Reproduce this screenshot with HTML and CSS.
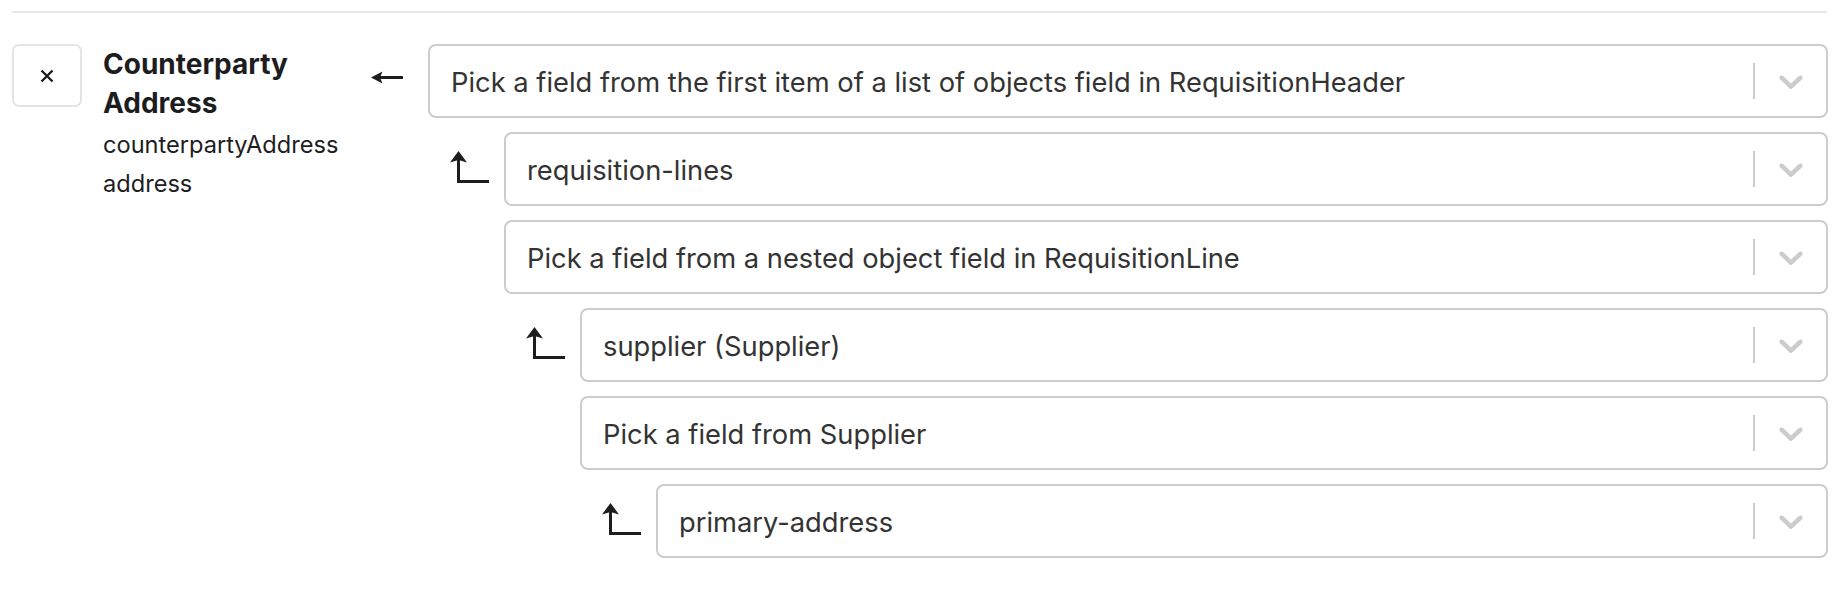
FILE: index.html
```html
<!DOCTYPE html>
<html lang="en">
<head>
    <meta charset="UTF-8">
    <title>Field mapping</title>
    <link rel="stylesheet" href="styles.css">
</head>
<body>
    <div class="page">
        <hr class="divider">
        <div class="mapping">
            <button class="remove" type="button" aria-label="Remove">
                <svg width="14" height="14" viewBox="0 0 14 14"><path d="M1.5 1.5 L12.5 12.5 M12.5 1.5 L1.5 12.5" stroke="#1d1d1f" stroke-width="2.4" fill="none"/></svg>
            </button>
            <div class="target">
                <div class="target-title">Counterparty Address</div>
                <div class="target-key">counterpartyAddress</div>
                <div class="target-key">address</div>
            </div>
            <div class="from-arrow">
                <svg width="33" height="13" viewBox="0 0 33 13"><path d="M0 6.5 L11.5 0.5 L9 6.5 L11.5 12.5 Z" fill="#1d1d1f"/><path d="M8 6.5 H32" stroke="#1d1d1f" stroke-width="3"/></svg>
            </div>
            <div class="tree">
                <div class="select">
                    <div class="select-value">Pick a field from the first item of a list of objects field in RequisitionHeader</div>
                    <span class="select-sep"></span>
                    <span class="select-ind"><svg width="40" height="40" viewBox="0 0 20 20"><path d="M4.516 7.548c0.436-0.446 1.043-0.481 1.576 0l3.908 3.747 3.908-3.747c0.533-0.481 1.141-0.446 1.574 0 0.436 0.445 0.408 1.197 0 1.615-0.406 0.418-4.695 4.502-4.695 4.502-0.217 0.223-0.502 0.335-0.787 0.335s-0.57-0.112-0.789-0.335c0 0-4.287-4.084-4.695-4.502s-0.436-1.17 0-1.615z" fill="#cccccc"/></svg></span>
                </div>
                <div class="nested">
                    <div class="turn"><svg width="40" height="32" viewBox="0 0 40 32"><path d="M8.5 0 L17 11.5 L8.5 9 L0 11.5 Z" fill="#1d1d1f"/><path d="M8.5 8 V30.5 H39" stroke="#1d1d1f" stroke-width="3" fill="none"/></svg></div>
                    <div class="tree">
                        <div class="select">
                            <div class="select-value">requisition-lines</div>
                            <span class="select-sep"></span>
                            <span class="select-ind"><svg width="40" height="40" viewBox="0 0 20 20"><path d="M4.516 7.548c0.436-0.446 1.043-0.481 1.576 0l3.908 3.747 3.908-3.747c0.533-0.481 1.141-0.446 1.574 0 0.436 0.445 0.408 1.197 0 1.615-0.406 0.418-4.695 4.502-4.695 4.502-0.217 0.223-0.502 0.335-0.787 0.335s-0.57-0.112-0.789-0.335c0 0-4.287-4.084-4.695-4.502s-0.436-1.17 0-1.615z" fill="#cccccc"/></svg></span>
                        </div>
                        <div class="select">
                            <div class="select-value">Pick a field from a nested object field in RequisitionLine</div>
                            <span class="select-sep"></span>
                            <span class="select-ind"><svg width="40" height="40" viewBox="0 0 20 20"><path d="M4.516 7.548c0.436-0.446 1.043-0.481 1.576 0l3.908 3.747 3.908-3.747c0.533-0.481 1.141-0.446 1.574 0 0.436 0.445 0.408 1.197 0 1.615-0.406 0.418-4.695 4.502-4.695 4.502-0.217 0.223-0.502 0.335-0.787 0.335s-0.57-0.112-0.789-0.335c0 0-4.287-4.084-4.695-4.502s-0.436-1.17 0-1.615z" fill="#cccccc"/></svg></span>
                        </div>
                        <div class="nested">
                            <div class="turn"><svg width="40" height="32" viewBox="0 0 40 32"><path d="M8.5 0 L17 11.5 L8.5 9 L0 11.5 Z" fill="#1d1d1f"/><path d="M8.5 8 V30.5 H39" stroke="#1d1d1f" stroke-width="3" fill="none"/></svg></div>
                            <div class="tree">
                                <div class="select">
                                    <div class="select-value">supplier (Supplier)</div>
                                    <span class="select-sep"></span>
                                    <span class="select-ind"><svg width="40" height="40" viewBox="0 0 20 20"><path d="M4.516 7.548c0.436-0.446 1.043-0.481 1.576 0l3.908 3.747 3.908-3.747c0.533-0.481 1.141-0.446 1.574 0 0.436 0.445 0.408 1.197 0 1.615-0.406 0.418-4.695 4.502-4.695 4.502-0.217 0.223-0.502 0.335-0.787 0.335s-0.57-0.112-0.789-0.335c0 0-4.287-4.084-4.695-4.502s-0.436-1.17 0-1.615z" fill="#cccccc"/></svg></span>
                                </div>
                                <div class="select">
                                    <div class="select-value">Pick a field from Supplier</div>
                                    <span class="select-sep"></span>
                                    <span class="select-ind"><svg width="40" height="40" viewBox="0 0 20 20"><path d="M4.516 7.548c0.436-0.446 1.043-0.481 1.576 0l3.908 3.747 3.908-3.747c0.533-0.481 1.141-0.446 1.574 0 0.436 0.445 0.408 1.197 0 1.615-0.406 0.418-4.695 4.502-4.695 4.502-0.217 0.223-0.502 0.335-0.787 0.335s-0.57-0.112-0.789-0.335c0 0-4.287-4.084-4.695-4.502s-0.436-1.17 0-1.615z" fill="#cccccc"/></svg></span>
                                </div>
                                <div class="nested">
                                    <div class="turn"><svg width="40" height="32" viewBox="0 0 40 32"><path d="M8.5 0 L17 11.5 L8.5 9 L0 11.5 Z" fill="#1d1d1f"/><path d="M8.5 8 V30.5 H39" stroke="#1d1d1f" stroke-width="3" fill="none"/></svg></div>
                                    <div class="tree">
                                        <div class="select">
                                            <div class="select-value">primary-address</div>
                                            <span class="select-sep"></span>
                                            <span class="select-ind"><svg width="40" height="40" viewBox="0 0 20 20"><path d="M4.516 7.548c0.436-0.446 1.043-0.481 1.576 0l3.908 3.747 3.908-3.747c0.533-0.481 1.141-0.446 1.574 0 0.436 0.445 0.408 1.197 0 1.615-0.406 0.418-4.695 4.502-4.695 4.502-0.217 0.223-0.502 0.335-0.787 0.335s-0.57-0.112-0.789-0.335c0 0-4.287-4.084-4.695-4.502s-0.436-1.17 0-1.615z" fill="#cccccc"/></svg></span>
                                        </div>
                                    </div>
                                </div>
                            </div>
                        </div>
                    </div>
                </div>
            </div>
        </div>
    </div>
</body>
</html>
```

FILE: styles.css
```css
body {
    margin: 0;
    background: #ffffff;
    font-family: Inter, "Noto Sans", sans-serif;
    color: #1d1d1f;
}

.page {
    padding: 11px 18px 0 12px;
}

.divider {
    margin: 0 1px 31px 0;
    border: none;
    height: 2px;
    background: #e6e6e6;
}

.mapping {
    display: flex;
    align-items: flex-start;
}

.remove {
    flex-shrink: 0;
    width: 70px;
    height: 63px;
    padding: 0;
    border: 2px solid #e4e4e4;
    border-radius: 7px;
    background: #ffffff;
    display: flex;
    align-items: center;
    justify-content: center;
}

.target {
    flex-shrink: 0;
    width: 268px;
    margin-left: 21px;
    padding-top: 1px;
}

.target-title {
    font-size: 28px;
    font-weight: 700;
    line-height: 39px;
    margin-bottom: 2px;
}

.target-key {
    font-size: 23.6px;
    line-height: 39px;
}

.from-arrow {
    flex-shrink: 0;
    margin: 27px 24px 0 0;
    display: flex;
}

.tree {
    flex: 1;
    display: flex;
    flex-direction: column;
    gap: 14px;
    min-width: 0;
}

.select {
    box-sizing: border-box;
    height: 74px;
    border: 2px solid #cccccc;
    border-radius: 8px;
    display: flex;
    align-items: center;
    background: #ffffff;
}

.select-value {
    flex: 1;
    padding: 2px 0 0 21px;
    font-size: 27.3px;
    color: #333333;
    white-space: nowrap;
    overflow: hidden;
}

.select-sep {
    align-self: stretch;
    width: 2px;
    margin: 17px 0;
    background: #cccccc;
}

.select-ind {
    display: flex;
    padding: 0 15px 0 16px;
}

.nested {
    display: flex;
    align-items: flex-start;
}

.turn {
    flex-shrink: 0;
    width: 76px;
    padding: 19px 0 0 22px;
    box-sizing: border-box;
    display: flex;
}
```
